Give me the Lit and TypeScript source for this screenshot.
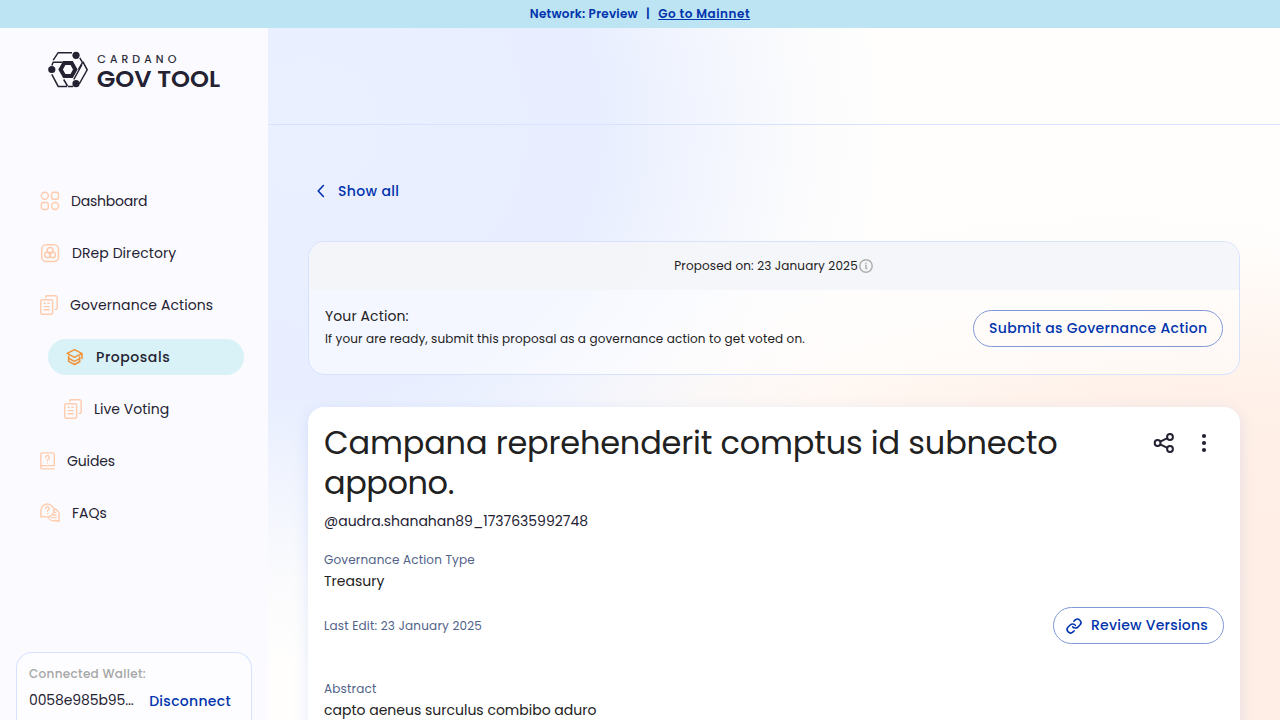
import { LitElement, html, css, svg } from "lit";
import { customElement } from "lit/decorators.js";

const stackIcon = svg`<g fill="none" stroke="currentColor" stroke-width="1.4" stroke-linecap="round" stroke-linejoin="round">
  <rect x=".8" y="4.7" width="11.8" height="14.6" rx="1.6"/>
  <path d="M5.6 2.6V2.3A1.6 1.6 0 0 1 7.2.8h8.4a1.6 1.6 0 0 1 1.6 1.6v10.4a1.6 1.6 0 0 1-1.6 1.6h-.4M4 8.3h1.2M7.8 8.3h1.4M4 11.6h5.2M4 14.8h5.2"/></g>`;

@customElement("app-root")
export class AppRoot extends LitElement {
  static styles = css`
    :host { display: block; height: 720px; overflow: hidden; color: #242232;
      font-family: Poppins, Inter, sans-serif; font-size: 14px; }
    * { box-sizing: border-box; }
    svg { display: block; flex: none; overflow: visible; }
    .page { display: flex; flex-direction: column; height: 720px; }
    .banner { height: 28px; flex: none; background: #bce4f2; color: #0033ad; display: flex; align-items: center;
      justify-content: center; font-size: 12px; font-weight: 600; }
    .net { letter-spacing: .25px; }
    .bar { padding: 0 8.5px 0 8px; }
    .banner u { letter-spacing: .53px; text-underline-offset: 1px; text-decoration-thickness: 1px; }
    .body { display: flex; flex: 1; min-height: 0; }
    .side { width: 268px; flex: none; background: #fbfbff; display: flex; flex-direction: column; }
    .logo { margin: 24px 0 0 48px; height: 36px; }
    .nav { margin-top: 95px; display: flex; flex-direction: column; gap: 16px; padding: 0 24px; }
    .item { height: 36px; display: flex; align-items: center; padding-left: 16px; }
    .item svg { color: #ffcbad; }
    .sub { margin-left: 24px; }
    .active { background: #d8f2f7; border-radius: 18px; font-weight: 500; padding-left: 18px; letter-spacing: .55px; }
    .active svg { color: #f29339; }
    .dash { letter-spacing: -.22px; }
    .drep { letter-spacing: .07px; }
    .acts { letter-spacing: .09px; }
    .guides { letter-spacing: -.12px; }
    .wallet { margin: auto 16px 0; height: 68px; border: 1px solid #d6e2ff; border-bottom: 0; border-radius: 16px 16px 0 0;
      background: #fdfdff; padding: 11px 12px 0; }
    .wl { font-size: 12px; line-height: 20px; font-weight: 500; color: #a5a6a5; letter-spacing: .33px; }
    .wr { display: flex; justify-content: space-between; align-items: flex-start; padding-right: 8px; line-height: 24px; margin-top: 4px; }
    .addr { letter-spacing: -.11px; }
    .disc { letter-spacing: .3px; padding-top: 1px; }
    .blue { color: #0033ad; font-weight: 500; }
    .main { flex: 1; min-width: 0; display: flex; flex-direction: column;
      background:
        radial-gradient(ellipse 420px 440px at 100% 96%, #ffeee5 0%, #ffeee5cc 50%, #ffeee500 100%),
        radial-gradient(ellipse 640px 330px at 84% 74%, #fff0e7 0%, #fff0e7e6 35%, #fff0e759 70%, #fff0e700 100%),
        radial-gradient(ellipse 580px 540px at 4% 14%, #eaf0ff 0%, #e8eeff 50%, #e8eeff99 66%, #e8eeff33 84%, #e8eeff00 100%),
        #fffefd; }
    .top { height: 97px; flex: none; border-bottom: 1px solid #d6e2ff; }
    .content { padding: 0 40px; display: flex; flex-direction: column; }
    .back { display: flex; align-items: center; height: 36px; margin-top: 48px; gap: 11px; padding-left: 7px; letter-spacing: .35px; }
    .action { margin-top: 32px; height: 134px; border: 1px solid #d6e2ff; border-radius: 16px; overflow: hidden; background: #ffffff80; }
    .date { height: 48px; background: #f3f4f8d9; display: flex; align-items: center; justify-content: center; font-size: 12px; color: #212121; letter-spacing: .15px; }
    .row { display: flex; justify-content: space-between; align-items: center; }
    .row.submit { padding: 0 16px; height: 76px; color: #212121; }
    .your { line-height: 22px; padding-bottom: 2px; margin-top: -2px; letter-spacing: .1px; }
    .small { font-size: 12px; line-height: 20px; letter-spacing: .132px; }
    .btn { border: 1px solid #8099d6; border-radius: 19px; height: 37px; display: flex; align-items: center; }
    .gov { width: 250px; padding-left: 15px; letter-spacing: .31px; }
    .rev { width: 171px; gap: 8px; padding-left: 11px; letter-spacing: .24px; }
    .card { margin-top: 32px; height: 360px; border-radius: 16px 16px 0 0; background: #fff; padding: 16px 16px 0;
      box-shadow: 0 4px 15px rgba(47, 98, 220, .13); display: flex; flex-direction: column; color: #212121; }
    h1 { margin: 0; font-weight: 400; font-size: 32px; line-height: 40px; letter-spacing: -.19px; }
    .second { letter-spacing: -.45px; }
    .head { display: flex; justify-content: space-between; }
    .tools { display: flex; gap: 16px; padding: 8px 8px 0 0; color: #242232; }
    .user { line-height: 24px; margin-top: 6px; color: #242232; }
    .label { font-size: 12px; line-height: 20px; color: #506288; letter-spacing: .17px; }
    .value { line-height: 22px; }
    .type { margin-top: 17px; }
    .edit { margin-top: 15px; height: 37px; }
    .edit .label { letter-spacing: .2px; }
    .abs { margin-top: 35px; }
  `;

  render() {
    return html`<div class="page">
      <div class="banner"><span class="net">Network: Preview</span><span class="bar">|</span><u>Go to Mainnet</u></div>
      <div class="body">
        <div class="side">
          <svg class="logo" width="176" height="36" viewBox="0 0 176 36" fill="#242232">
            <g fill="none" stroke="#242232" stroke-width="1.5">
              <path d="M5.2 8.2 10.2.7H24M3.8 13.5l1.4-3.3h9.5M31.8 5.8l2.6 4.7-4 7M34.8 9.7l4.4 8.1-8 14.2M3.8 22.3l6.4 12.1h9M15.7 27.5l3.8 6.5M34 12.5l-8.2 15M20 34.4h5"/>
            </g>
            <circle cx="3.8" cy="17.5" r="3.6"/><circle cx="28" cy="3.3" r="3.6"/><circle cx="28" cy="31.7" r="3.6"/>
            <path fill-rule="evenodd" d="M15.2 9.1h9.6l4.8 8.4-4.8 8.5h-9.6l-4.9-8.5zM17.4 13l-2.5 4.5 2.5 4.6h5.1l2.5-4.6-2.5-4.5z"/>
            <text x="49.3" y="11.2" font-size="11" font-weight="400" stroke="#242232" stroke-width=".2" textLength="79">CARDANO</text>
            <text x="48.7" y="34.9" font-size="23.6" font-weight="600" textLength="123.5" lengthAdjust="spacingAndGlyphs">GOV TOOL</text>
          </svg>
          <div class="nav">
            <div class="item dash"><svg width="31" height="20" viewBox="0 0 31 20" fill="none" stroke="currentColor" stroke-width="1.4"><circle cx="4.8" cy="4.8" r="3.5"/><rect x="11.5" y="1.3" width="7" height="7" rx="2.2"/><rect x="1.3" y="11.5" width="7" height="7" rx="2.2"/><circle cx="15" cy="15" r="3.5"/></svg><span>Dashboard</span></div>
            <div class="item drep"><svg width="32" height="20" viewBox="0 0 32 20" fill="none" stroke="currentColor" stroke-width="1.5"><rect x="1.7" y="1.7" width="16.8" height="16.8" rx="4.5"/><circle cx="10.1" cy="7.5" r="2.9"/><circle cx="7.6" cy="11.8" r="2.9"/><circle cx="12.6" cy="11.8" r="2.9"/></svg><span>DRep Directory</span></div>
            <div class="item acts"><svg width="30" height="20" viewBox="0 0 30 20">${stackIcon}</svg><span>Governance Actions</span></div>
            <div class="item sub active"><svg width="30" height="18" viewBox="0 0 30 18" fill="none" stroke="currentColor" stroke-width="1.6" stroke-linejoin="round" stroke-linecap="round"><path d="M8.5 1.6 1.2 5.4l7.3 4 7.3-4zM16 5.5v5M2.6 8.4v1.8l5.9 3.2 5.2-2.8V8.8M2.6 11v2.4l5.9 3.1 5.2-2.8v-2.2"/></svg><span>Proposals</span></div>
            <div class="item sub"><svg width="30" height="20" viewBox="0 0 30 20">${stackIcon}</svg><span>Live Voting</span></div>
            <div class="item guides"><svg width="27" height="18" viewBox="0 0 27 18" fill="none" stroke="currentColor" stroke-width="1.4" stroke-linecap="round"><path d="M.8 15.2V2.4A1.5 1.5 0 0 1 2.3.9h10.5a1.5 1.5 0 0 1 1.5 1.5v11.2H2.4a1.6 1.6 0 0 0 0 3.3h11.7M5.6 5.5a1.9 1.9 0 1 1 2.7 1.7c-.6.3-.8.6-.8 1.3M7.5 10.6v.1"/></svg><span>Guides</span></div>
            <div class="item"><svg width="32" height="20" viewBox="0 0 32 20" fill="none" stroke="currentColor" stroke-width="1.4" stroke-linecap="round" stroke-linejoin="round"><path d="M.9 14V7.6A6.5 6.5 0 1 1 4.6 13.4zM14.2 5.8a6.2 6.2 0 0 1 4.5 8.6l.5 3.8-3.6-.7a6.2 6.2 0 0 1-7.4-3.2M5.5 5.4a1.8 1.8 0 1 1 2.6 1.7c-.6.3-.7.6-.7 1.2M7.4 10.6v.1M14.7 9.4h1M13.4 12h2.8M11.7 14.6h4.5"/></svg><span>FAQs</span></div>
          </div>
          <div class="wallet"><div class="wl">Connected Wallet:</div><div class="wr"><span class="addr">0058e985b95...</span><span class="blue disc">Disconnect</span></div></div>
        </div>
        <div class="main">
          <div class="top"></div>
          <div class="content">
            <div class="back blue"><svg width="12" height="14" viewBox="0 0 12 14" fill="none" stroke="currentColor" stroke-width="1.6" stroke-linecap="round" stroke-linejoin="round"><path d="M8.4 1.5 3.2 7l5.2 5.5"/></svg><span>Show all</span></div>
            <div class="action">
              <div class="date"><span>Proposed on: 23 January 2025</span><svg width="16" height="16" viewBox="0 0 16 16" fill="none" stroke="#adaead" stroke-width="1.4"><circle cx="8" cy="8" r="6.2"/><path d="M7 7.4h1v3.1h1.3M7.3 5.3h1.2"/></svg></div>
              <div class="row submit"><div><div class="your">Your Action:</div><div class="small">If your are ready, submit this proposal as a governance action to get voted on.</div></div>
                <div class="btn gov blue"><span>Submit as Governance Action</span></div></div>
            </div>
            <div class="card">
              <div class="head"><h1>Campana reprehenderit comptus id subnecto<br><span class="second">appono.</span></h1>
                <div class="tools">
                  <svg width="24" height="24" viewBox="0 0 24 24" fill="none" stroke="currentColor" stroke-width="2"><circle cx="5.6" cy="12" r="2.9"/><circle cx="18" cy="6" r="2.9"/><circle cx="18" cy="18" r="2.9"/><path d="m8.2 10.7 7.2-3.5M8.2 13.3l7.2 3.5"/></svg>
                  <svg width="24" height="24" viewBox="0 0 24 24" fill="currentColor"><circle cx="12" cy="5" r="2.1"/><circle cx="12" cy="12" r="2.1"/><circle cx="12" cy="19" r="2.1"/></svg>
                </div></div>
              <div class="user"><span>@audra.shanahan89_1737635992748</span></div>
              <div class="label type">Governance Action Type</div>
              <div class="value">Treasury</div>
              <div class="row edit"><span class="label">Last Edit: 23 January 2025</span>
                <div class="btn rev blue"><svg width="18" height="18" viewBox="0 0 24 24" fill="none" stroke="currentColor" stroke-width="2.2" stroke-linecap="round" stroke-linejoin="round"><g transform="translate(1 1) scale(.92)"><path d="M10 13a5 5 0 0 0 7.54.54l3-3a5 5 0 0 0-7.07-7.07l-1.72 1.71M14 11a5 5 0 0 0-7.54-.54l-3 3a5 5 0 0 0 7.07 7.07l1.71-1.71"/></g></svg><span>Review Versions</span></div></div>
              <div class="label abs">Abstract</div>
              <div class="value">capto aeneus surculus combibo aduro</div>
            </div>
          </div>
        </div>
      </div>
    </div>`;
  }
}
